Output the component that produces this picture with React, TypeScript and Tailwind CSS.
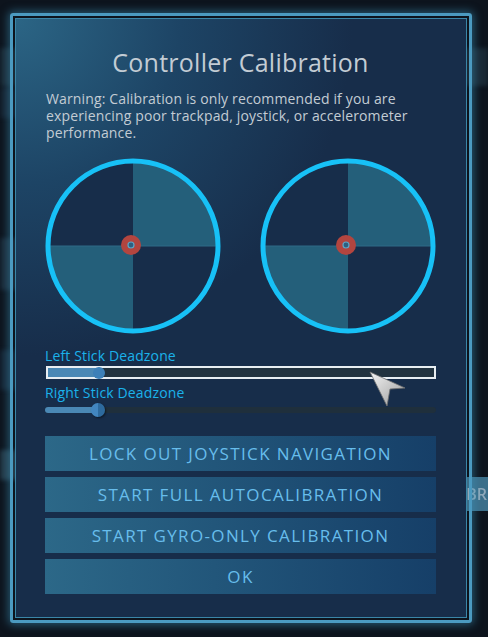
import React from "react";

const font = { fontFamily: '"Open Sans", "Noto Sans", sans-serif' };

function Stick() {
  return (
    <svg width="176" height="176" viewBox="0 0 176 176">
      <circle cx="88" cy="88" r="85" fill="#172d4a" />
      {/* filled quadrants */}
      <path d="M88 88 L88 3 A85 85 0 0 1 173 88 Z" fill="#245f7a" />
      <path d="M88 88 L88 173 A85 85 0 0 1 3 88 Z" fill="#245f7a" />
      <line x1="3" y1="88" x2="173" y2="88" stroke="#2f6a86" strokeWidth="1" />
      <circle cx="88" cy="88" r="85" fill="none" stroke="#17c1f7" strokeWidth="5" />
      <circle cx="86" cy="87" r="10" fill="#b3453f" />
      <circle cx="86" cy="87" r="3" fill="#2d5f80" stroke="#5ba6c8" strokeWidth="1.2" />
    </svg>
  );
}

function Cursor() {
  return (
    <svg
      className="absolute left-[368px] top-[370px]"
      width="40"
      height="40"
      viewBox="0 0 40 40"
    >
      <defs>
        <linearGradient id="cg" x1="0" y1="0" x2="1" y2="1">
          <stop offset="0" stopColor="#f4f4f4" />
          <stop offset="1" stopColor="#9a9a9a" />
        </linearGradient>
      </defs>
      <path
        d="M2 2 L37 18 L22 19 L19 36 Z"
        fill="url(#cg)"
        stroke="#707070"
        strokeWidth="0.8"
        strokeLinejoin="round"
      />
    </svg>
  );
}

function Button({ label }: { label: string }) {
  return (
    <button className="h-[35px] w-full bg-gradient-to-r from-[#2c6888] to-[#163f68] text-[17px] tracking-[0.08em] text-[#67bdec]">
      {label}
    </button>
  );
}

export default function App() {
  return (
    <main
      className="relative h-[637px] w-[488px] overflow-hidden bg-[#0d141d]"
      style={font}
    >
      {/* background bits behind the dialog */}
      <div className="flex h-full flex-col gap-0 pt-[48px] blur-[2px]">
        <div className="h-[38px] w-full bg-[#1a2a36]" />
        <div className="mt-[2px] h-[30px] w-[20px] bg-[#152230]" />
        <div className="mt-[120px] h-[52px] w-[20px] bg-[#1a2a38]" />
        <div className="mt-[60px] h-[40px] w-[20px] bg-[#162636]" />
        <div className="mt-[60px] h-[30px] w-[20px] bg-[#243a48]" />
      </div>
      <div className="absolute left-[440px] top-[477px] flex h-[34px] w-[48px] items-center justify-end bg-[#3b6f8a] pr-[1px] text-[16px] font-semibold text-[#8fa9ba] blur-[0.5px]">
        BR
      </div>

      {/* dialog */}
      <div className="absolute left-[10px] top-[13px] h-[610px] w-[462px] rounded-[3px] border-[3px] border-[#4b9ac0] p-[2px] shadow-[0_0_8px_2px_rgba(60,150,190,0.5)]">
        <div className="flex h-full flex-col border border-[#3a86a8] bg-[#172d4a] bg-[radial-gradient(circle_at_0%_0%,#2b6585_0%,#1d4465_22%,#172d4a_45%)] pl-[29px] pr-[30px]">
          <h1 className="mt-[27px] text-center text-[25px] leading-[32px] tracking-[0.01em] text-[#c3ccd4]">
            Controller Calibration
          </h1>
          <p className="mt-[12px] pl-[1px] text-[14px] leading-[17px] tracking-[0.01em] text-[#c3ccd4]">
            Warning: Calibration is only recommended if you are experiencing
            poor trackpad, joystick, or accelerometer performance.
          </p>

          <div className="mt-[17px] flex justify-between">
            <Stick />
            <Stick />
          </div>

          <div className="mt-[13px] text-[14px] leading-[17px] tracking-[0.01em] text-[#1bb2ea]">
            Left Stick Deadzone
          </div>
          <div className="mt-[2px] ml-[1px] h-[13px] border-2 border-[#e8eef2] bg-[#223340]">
            <div className="relative h-full w-[52px] bg-[#4a88b5]">
              <div className="absolute -right-[5px] top-[-1.5px] h-[12px] w-[12px] rounded-full bg-[#3d80b8]" />
            </div>
          </div>

          <div className="mt-[5px] text-[14px] leading-[17px] tracking-[0.01em] text-[#1bb2ea]">
            Right Stick Deadzone
          </div>
          <div className="mt-[6px] h-[6px] rounded-full bg-[#1f2f3c]">
            <div className="relative h-full w-[53px] rounded-l-full bg-[#4a88b5]">
              <div className="absolute -right-[7px] top-[-4px] h-[14px] w-[14px] rounded-full bg-[linear-gradient(90deg,#4286c0_50%,#2d6a9e_50%)] shadow-[1px_1px_2px_rgba(0,0,0,0.5)]" />
            </div>
          </div>

          <div className="mt-[23px] flex flex-col gap-[6px]">
            <Button label="LOCK OUT JOYSTICK NAVIGATION" />
            <Button label="START FULL AUTOCALIBRATION" />
            <Button label="START GYRO-ONLY CALIBRATION" />
            <Button label="OK" />
          </div>
        </div>
      </div>

      <Cursor />
    </main>
  );
}
